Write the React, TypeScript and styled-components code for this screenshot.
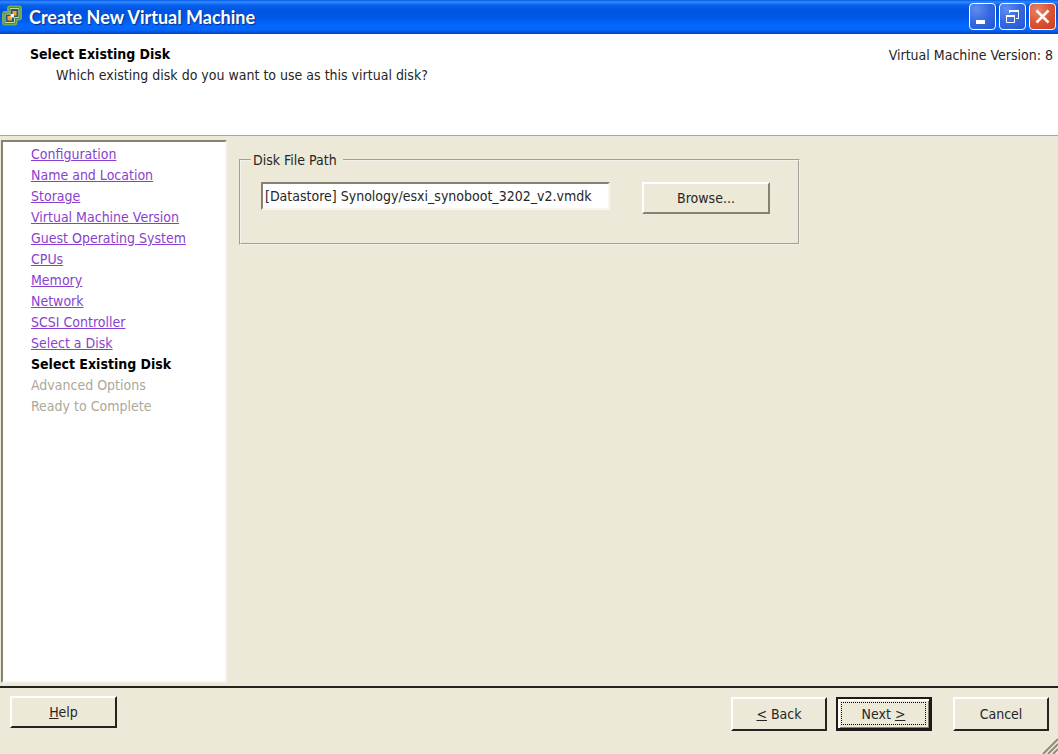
import React from 'react';
import styled, { createGlobalStyle, css } from 'styled-components';

const face = '#ece9d8';
const shade = '#85826f';
const uiFont = '"DejaVu Sans Condensed", "DejaVu Sans", Tahoma, sans-serif';

const GlobalStyle = createGlobalStyle`
  *, *::before, *::after { box-sizing: border-box; }
  body { margin: 0; background: ${face}; }
  body, button, input { font-family: ${uiFont}; font-size: 14px; color: #262626; }
`;

const Window = styled.div`
  display: flex;
  flex-direction: column;
  min-height: 100vh;
  position: relative;
  background: ${face};
`;

const TitleBar = styled.header`
  display: flex;
  align-items: center;
  height: 34px;
  padding: 0 2px 2px 2px;
  background: linear-gradient(#0a5be8 0, #2f8bff 2px, #0660ee 5px, #0055e0 10px, #0058e8 18px, #0468ff 26px, #0466fc 30px, #0040c8 34px);
`;

const Title = styled.h1`
  flex: 1;
  margin: 0 0 0 7px;
  padding-top: 2px;
  font: 700 18px/32px Lato, sans-serif;
  color: #fff;
  text-shadow: 1px 1px 1px #0a2f8c;
`;

const Caption = styled.div`
  display: flex;
  gap: 3px;
`;

const CaptionButton = styled.button<{ $close?: boolean }>`
  width: 27px;
  height: 27px;
  padding: 0;
  border: 1px solid #fff;
  border-radius: 4px;
  background: ${p => p.$close
    ? 'radial-gradient(circle at 30% 25%, #e58468, #dc5433 50%, #c8401e)'
    : 'radial-gradient(circle at 25% 20%, #5f8df0, #3468e0 50%, #2456d0)'};
  svg { display: block; margin: auto; }
`;

const Banner = styled.section`
  display: flex;
  justify-content: space-between;
  height: 102px;
  padding: 10px 5px 0 30px;
  background: #fff;
  border-bottom: 1px solid #aca899;
  line-height: 21px;
`;

const Heading = styled.h2`
  margin: 0;
  font-size: 14px;
  line-height: 21px;
  color: #000;
`;

const Question = styled.p`
  margin: 0 0 0 26px;
`;

const Version = styled.p`
  margin: 1px 0 0;
`;

const Body = styled.div`
  display: flex;
  flex: 1;
  padding: 4px 0 3px 1px;
  border-bottom: 2px solid #24231e;
`;

const Steps = styled.nav`
  width: 226px;
  padding: 2px 0 0 28px;
  background: #fff;
  border: 2px solid;
  border-color: ${shade} #f6f4ea #f6f4ea ${shade};
  ol { margin: 0; padding: 0; list-style: none; }
  li { line-height: 21px; }
`;

const StepLink = styled.a`
  color: #8a3fd0;
  text-decoration: underline;
`;

const CurrentStep = styled.strong`
  color: #000;
`;

const PendingStep = styled.span`
  color: #aca899;
`;

const Content = styled.main`
  flex: 1;
  padding: 12px 16px 0 12px;
`;

const PathGroup = styled.fieldset`
  display: flex;
  align-items: flex-start;
  gap: 32px;
  width: 561px;
  height: 93px;
  margin: 0;
  padding: 14px 20px 0;
  border: 2px groove #f4f2e8;
  legend { margin-left: -10px; padding: 0 6px 0 2px; line-height: 16px; }
`;

const PathInput = styled.input`
  width: 349px;
  height: 28px;
  padding: 0 2px;
  background: #fff;
  border: 2px solid;
  border-color: ${shade} #f8f6ee #f8f6ee ${shade};
  outline: 0;
`;

const PushButton = styled.button<{ $width: number; $soft?: boolean; $short?: boolean; $primary?: boolean }>`
  width: ${p => p.$width}px;
  height: ${p => (p.$soft || p.$short ? 32 : 34)}px;
  padding: 0;
  background: ${face};
  border: 2px solid;
  border-color: ${p => (p.$soft ? `#fff ${shade} ${shade} #fff` : '#fff #24231e #24231e #fff')};
  ${p => p.$primary && css`
    border-color: #1c1b17;
    border-width: 2px 3px 3px 2px;
    box-shadow: inset 2px 2px #fff, inset -1px -1px ${shade};
  `}
`;

const FocusRing = styled.span`
  display: flex;
  align-items: center;
  justify-content: center;
  height: 23px;
  margin: 0 3px;
  border: 1px dotted #000;
`;

const Footer = styled.footer`
  display: flex;
  align-items: flex-start;
  justify-content: space-between;
  height: 66px;
  padding: 8px 9px 0 10px;
`;

const Actions = styled.div`
  display: flex;
  gap: 9px;
  padding-top: 1px;
`;

const CancelSlot = styled.div`
  margin-left: 12px;
`;

const Grip = styled.svg`
  position: absolute;
  right: 0;
  bottom: 0;
`;

const visited = [
  'Configuration', 'Name and Location', 'Storage', 'Virtual Machine Version',
  'Guest Operating System', 'CPUs', 'Memory', 'Network', 'SCSI Controller', 'Select a Disk',
];
const pending = ['Advanced Options', 'Ready to Complete'];

const AppIcon = () => (
  <svg width="20" height="22" viewBox="0 0 20 22" aria-hidden="true">
    <path d="M8 1.500h9q2 0 2 2v9q0 2-2 2h-2.500v3q0 2-2 2H3q-2 0-2-2V9q0-2 2-2h3V3.500q0-2 2-2z" fill="#2b5a68" stroke="#6fae52" strokeWidth="2" />
    <path d="M8 3.500h9v9h-4.500v5H3V9h5z" fill="none" stroke="#c4dca0" strokeWidth="1" />
    <path d="M10.500 6h4v4.500h-4zM5.500 11h4.500v4.500H5.500z" fill="#f0a040" />
    <path d="M8.500 9h3.500v3.500H8.500z" fill="#fff0d0" />
  </svg>
);

export default function App() {
  return (
    <>
      <GlobalStyle />
      <Window>
        <TitleBar>
          <AppIcon />
          <Title>Create New Virtual Machine</Title>
          <Caption>
            <CaptionButton aria-label="Minimize">
              <svg width="25" height="25"><path d="M6 16h9v4H6z" fill="#fff" /></svg>
            </CaptionButton>
            <CaptionButton aria-label="Restore">
              <svg width="25" height="25" fill="none" stroke="#fff">
                <path d="M9.500 9V6.500h9v8H16" />
                <path d="M9 7h10" strokeWidth="2" />
                <path d="M6.500 11.500h8v7h-8z" />
                <path d="M6 12h9" strokeWidth="2" />
              </svg>
            </CaptionButton>
            <CaptionButton $close aria-label="Close">
              <svg width="25" height="25"><path d="M6.500 6.500l12 12M18.500 6.500l-12 12" stroke="#fff" strokeWidth="2.500" /></svg>
            </CaptionButton>
          </Caption>
        </TitleBar>

        <Banner>
          <div>
            <Heading>Select Existing Disk</Heading>
            <Question>Which existing disk do you want to use as this virtual disk?</Question>
          </div>
          <Version>Virtual Machine Version: 8</Version>
        </Banner>

        <Body>
          <Steps aria-label="Wizard steps">
            <ol>
              {visited.map(name => (
                <li key={name}><StepLink href="#">{name}</StepLink></li>
              ))}
              <li><CurrentStep aria-current="step">Select Existing Disk</CurrentStep></li>
              {pending.map(name => (
                <li key={name}><PendingStep>{name}</PendingStep></li>
              ))}
            </ol>
          </Steps>
          <Content>
            <PathGroup>
              <legend><label htmlFor="path">Disk File Path</label></legend>
              <PathInput id="path" defaultValue="[Datastore] Synology/esxi_synoboot_3202_v2.vmdk" />
              <PushButton $width={128} $soft>Browse...</PushButton>
            </PathGroup>
          </Content>
        </Body>

        <Footer>
          <PushButton $width={107} $short><u>H</u>elp</PushButton>
          <Actions>
            <PushButton $width={96}><u>&lt;</u> Back</PushButton>
            <PushButton $width={96} $primary><FocusRing>Next&nbsp;<u>&gt;</u></FocusRing></PushButton>
            <CancelSlot><PushButton $width={96}>Cancel</PushButton></CancelSlot>
          </Actions>
        </Footer>
        <Grip width="16" height="16" aria-hidden="true">
          <path d="M1 16L16 1M6 16L16 6M11 16l5-5" stroke="#8f8c7c" strokeWidth="2" />
        </Grip>
      </Window>
    </>
  );
}
